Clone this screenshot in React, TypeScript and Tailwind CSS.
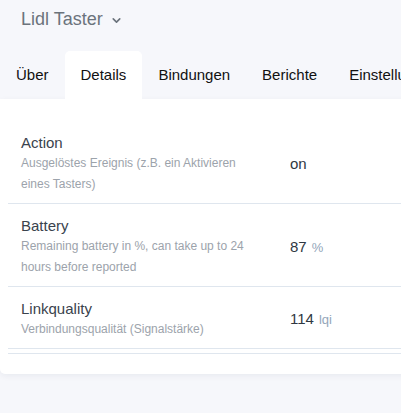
import { ChevronDown } from "lucide-react";

const rows = [
  {
    name: "Action",
    desc: "Ausgelöstes Ereignis (z.B. ein Aktivieren eines Tasters)",
    value: "on",
    unit: "",
  },
  {
    name: "Battery",
    desc: "Remaining battery in %, can take up to 24 hours before reported",
    value: "87",
    unit: "%",
  },
  {
    name: "Linkquality",
    desc: "Verbindungsqualität (Signalstärke)",
    value: "114",
    unit: "lqi",
  },
];

const tabs = ["Über", "Details", "Bindungen", "Berichte", "Einstellungen"];

export default function App() {
  return (
    <div
      className="w-[401px] h-[413px] overflow-hidden bg-[#f6f7fb]"
      style={{ fontFamily: '"Liberation Sans", Arial, sans-serif' }}
    >
      {/* Device header */}
      <div className="flex items-center h-[40px] pl-[21px] pb-[1px]">
        <span className="text-[18px] text-[#6b737c]">Lidl Taster</span>
        <ChevronDown className="ml-[7px] mt-[2px] w-[13px] h-[13px] text-[#6b737c]" strokeWidth={3} />
      </div>

      {/* Tabs */}
      <div className="flex mt-[11px] h-[48px] whitespace-nowrap">
        {tabs.map((t) => (
          <div
            key={t}
            className={
              t === "Details"
                ? "flex items-center px-4 text-[15px] text-[#111] bg-white rounded-t-[5px]"
                : "flex items-center px-4 text-[15px] text-[#111]"
            }
          >
            {t}
          </div>
        ))}
      </div>

      {/* Card */}
      <div className="w-[420px] bg-white rounded-b-[5px] shadow-[0_2px_6px_rgba(20,30,60,0.06)] pt-[22px] pb-[20px]">
        <div className="ml-2">
          {rows.map((r) => (
            <div
              key={r.name}
              className="flex items-center border-b border-[#dfe6ee] pl-[13px] pt-[12px] pb-[8px]"
            >
              <div className="w-[269px] pr-6">
                <div className="text-[15px] leading-5 text-[#3a434d]">{r.name}</div>
                <div className="text-[12px] leading-[21px] text-[#9ca3ab]">{r.desc}</div>
              </div>
              <div className="text-[15px] text-[#2f3842]">
                {r.value}
                {r.unit && <span className="ml-[5px] text-[13px] text-[#93a6ba]">{r.unit}</span>}
              </div>
            </div>
          ))}
          <div className="mt-[4px] border-b border-[#dfe6ee]" />
        </div>
      </div>
    </div>
  );
}
